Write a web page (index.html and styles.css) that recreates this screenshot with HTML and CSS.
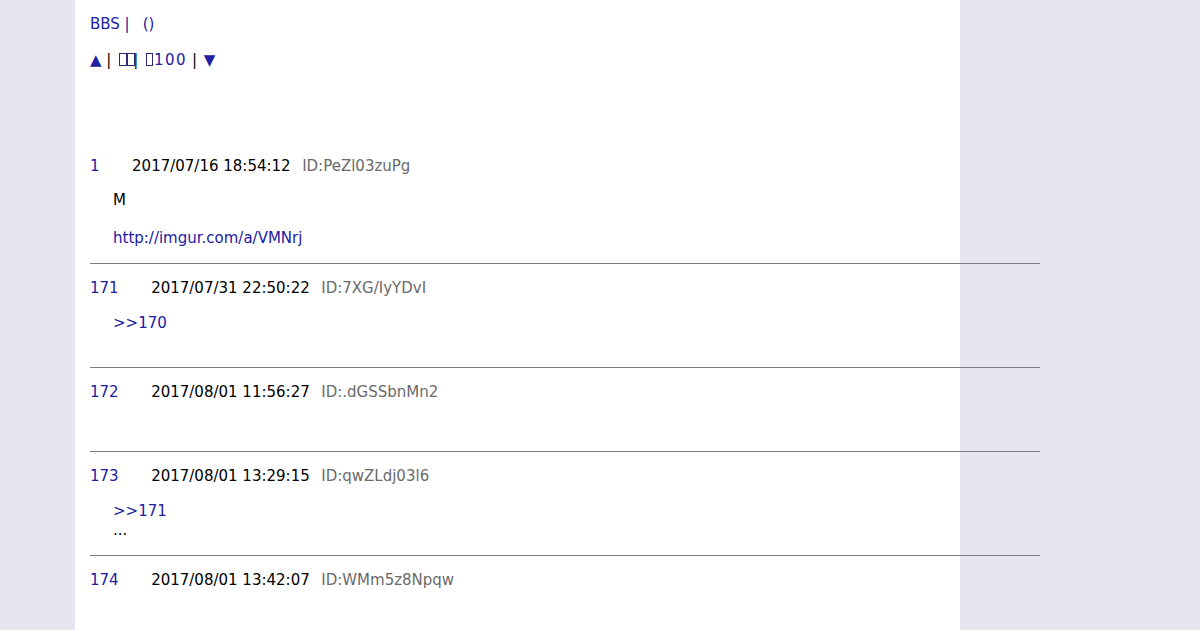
FILE: index.html
```html
<!DOCTYPE html>
<html>
<head>
<meta charset="utf-8">
<link rel="stylesheet" href="styles.css">
</head>
<body>
<div class="page">
  <div class="title"><a href="#">BBS |</a><a href="#" class="paren">()</a></div>
  <div class="nav"><a href="#" class="tri">▲</a> <span class="sep">|</span> <a href="#" class="tofus"><span class="tofu t1"></span><span class="tofu"></span></a><span class="sep bar2">|</span> <a href="#" class="last"><span class="tofu t3"></span>100</a> <span class="sep">|</span> <a href="#" class="tri down">▼</a></div>

  <div class="thread">
    <div class="post">
      <div class="head"><a href="#" class="num">1</a><span class="date">2017/07/16 18:54:12</span><span class="id">ID:PeZl03zuPg</span></div>
      <div class="msg">M<br>&nbsp;<br><a href="#">http://imgur.com/a/VMNrj</a></div>
    </div>
    <hr class="rule">
    <div class="post">
      <div class="head"><a href="#" class="num">171</a><span class="date">2017/07/31 22:50:22</span><span class="id">ID:7XG/IyYDvI</span></div>
      <div class="msg reply"><a href="#">&gt;&gt;170</a><br>&nbsp;</div>
    </div>
    <hr class="rule">
    <div class="post">
      <div class="head"><a href="#" class="num">172</a><span class="date">2017/08/01 11:56:27</span><span class="id">ID:.dGSSbnMn2</span></div>
      <div class="msg">&nbsp;</div>
    </div>
    <hr class="rule">
    <div class="post">
      <div class="head"><a href="#" class="num">173</a><span class="date">2017/08/01 13:29:15</span><span class="id">ID:qwZLdj03l6</span></div>
      <div class="msg reply"><a href="#">&gt;&gt;171</a><br>...</div>
    </div>
    <hr class="rule">
    <div class="post">
      <div class="head"><a href="#" class="num">174</a><span class="date">2017/08/01 13:42:07</span><span class="id">ID:WMm5z8Npqw</span></div>
      <div class="msg">&nbsp;</div>
    </div>
  </div>
</div>
</body>
</html>
```
FILE: styles.css
```css
html, body {
  margin: 0;
  padding: 0;
  background: #e6e6f0;
}
body {
  font-family: "DejaVu Sans", sans-serif;
  font-size: 15px;
  line-height: 19px;
  color: #000;
}
a {
  color: #2020a0;
  text-decoration: none;
}
.page {
  width: 885px;
  margin-left: 75px;
  min-height: 630px;
  background: #fff;
  padding: 15px 15px 0;
  box-sizing: border-box;
}
.paren {
  margin-left: 13px;
}
.nav {
  margin-top: 17px;
  white-space: nowrap;
}
.sep {
  color: #000;
}
.tofu {
  display: inline-block;
  width: 6px;
  height: 11px;
  border: 1px solid #2a2a70;
  vertical-align: -1px;
}
.t1 {
  margin-left: 3px;
}
.bar2 {
  margin-left: -2px;
}
.t3 {
  margin-left: 3px;
  width: 5px;
  margin-right: 1px;
}
.last {
  letter-spacing: 1.5px;
}
.down {
  margin-left: 2px;
}
.thread {
  margin-top: 87px;
}
.head {
  display: flex;
  white-space: nowrap;
}
.date {
  margin-left: 32.5px;
}
.id {
  margin-left: 11.5px;
  color: #6a6a6a;
}
.msg {
  margin: 15px 0 15px 23px;
}
.msg.reply {
  margin-top: 16px;
}
.rule {
  width: 950px;
  height: 1px;
  border: 0;
  margin: 0 0 15px;
  background: #7c7c82;
}
```
